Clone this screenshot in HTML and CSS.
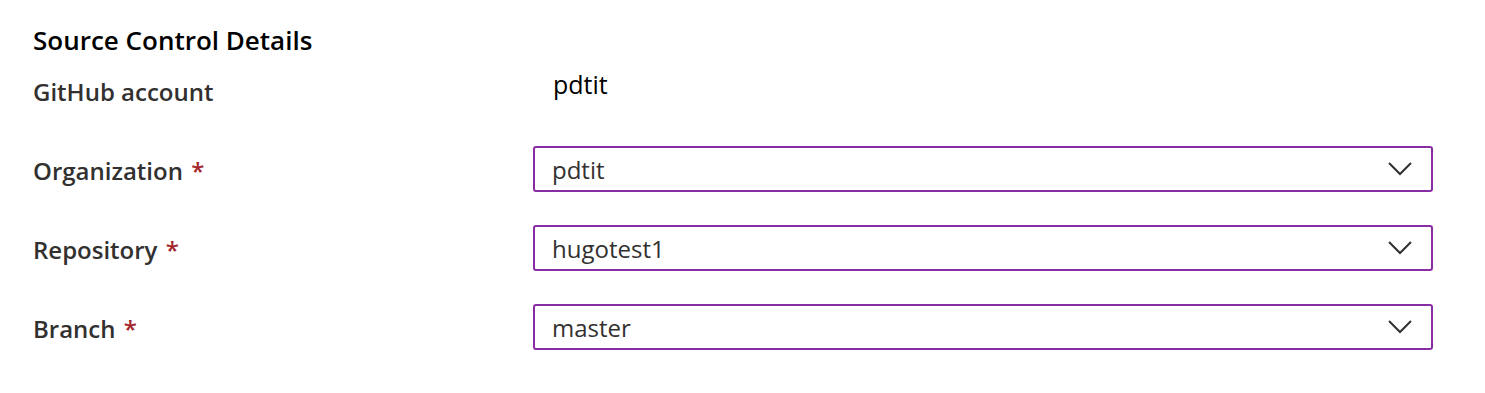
FILE: index.html
```html
<!DOCTYPE html>
<html>
<head>
<meta charset="utf-8">
<link rel="stylesheet" href="styles.css">
</head>
<body>
<div class="panel">
  <h2 class="title">Source Control Details</h2>
  <div class="form">
    <div class="row row-static">
      <div class="label">GitHub account</div>
      <div class="value">pdtit</div>
    </div>
    <div class="row">
      <div class="label">Organization <span class="req">*</span></div>
      <div class="select"><span class="sel-text">pdtit</span>
        <svg class="chev" viewBox="0 0 24 14" width="24" height="14"><path d="M1 1 L12 12 L23 1" fill="none" stroke="#323130" stroke-width="2"/></svg>
      </div>
    </div>
    <div class="row">
      <div class="label">Repository <span class="req">*</span></div>
      <div class="select"><span class="sel-text">hugotest1</span>
        <svg class="chev" viewBox="0 0 24 14" width="24" height="14"><path d="M1 1 L12 12 L23 1" fill="none" stroke="#323130" stroke-width="2"/></svg>
      </div>
    </div>
    <div class="row">
      <div class="label">Branch <span class="req">*</span></div>
      <div class="select"><span class="sel-text">master</span>
        <svg class="chev" viewBox="0 0 24 14" width="24" height="14"><path d="M1 1 L12 12 L23 1" fill="none" stroke="#323130" stroke-width="2"/></svg>
      </div>
    </div>
  </div>
</div>
</body>
</html>
```
FILE: styles.css
```css
html, body {
  margin: 0;
  padding: 0;
  background: #ffffff;
}
body {
  font-family: "Open Sans", "Noto Sans", sans-serif;
  color: #323130;
}
.panel {
  padding: 21px 0 0 33px;
  width: 1400px;
}
.title {
  margin: 0;
  font-size: 26px;
  font-weight: 600;
  color: #000000;
  line-height: 38px;
}
.form {
  display: flex;
  flex-direction: column;
  gap: 33px;
  margin-top: 14px;
}
.row {
  display: grid;
  grid-template-columns: 500px 900px;
  align-items: center;
  height: 46px;
}
.row-static {
  height: 40px;
  align-items: start;
  margin-top: -10px;
  margin-bottom: 10px;
}
.label {
  font-size: 24px;
  font-weight: 600;
  color: #323130;
  padding-top: 2px;
}
.row-static .label {
  padding-top: 12px;
}
.value {
  font-size: 25px;
  color: #000000;
  padding-left: 20px;
  padding-top: 4px;
}
.req {
  color: #a4262c;
  margin-left: 2px;
}
.select {
  box-sizing: border-box;
  height: 46px;
  border: 2px solid #8a2da5;
  border-radius: 3px;
  display: flex;
  align-items: center;
  justify-content: space-between;
  padding: 0 19px 0 17px;
}
.sel-text {
  font-size: 24px;
  color: #323130;
}
.chev {
  display: block;
}
```
